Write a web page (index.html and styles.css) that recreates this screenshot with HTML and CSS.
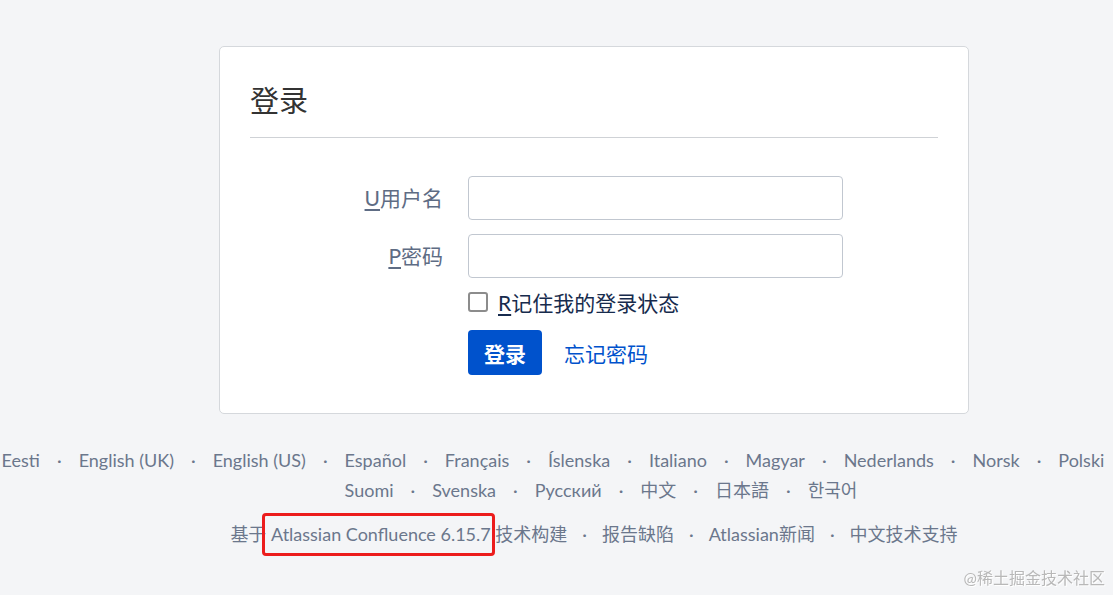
FILE: index.html
```html
<!DOCTYPE html>
<html lang="zh-CN">
<head>
    <meta charset="UTF-8">
    <title>登录 - Confluence</title>
    <link rel="stylesheet" href="styles.css">
</head>
<body>
    <div class="page">
        <div class="login-card">
            <div class="card-header">
                <h1>登录</h1>
            </div>
            <form class="login-form">
                <label class="field-label" for="os_username"><u>U</u>用户名</label>
                <input class="text-input" type="text" id="os_username">

                <label class="field-label" for="os_password"><u>P</u>密码</label>
                <input class="text-input" type="password" id="os_password">

                <div class="remember-row">
                    <span class="checkbox"></span>
                    <span class="remember-text"><u>R</u>记住我的登录状态</span>
                </div>

                <div class="button-row">
                    <button type="button" class="primary-button">登录</button>
                    <a href="#" class="forgot-link">忘记密码</a>
                </div>
            </form>
        </div>

        <div class="footer">
            <ul class="lang-row first">
                <li>Eesti</li>
                <li>English (UK)</li>
                <li>English (US)</li>
                <li>Español</li>
                <li>Français</li>
                <li>Íslenska</li>
                <li>Italiano</li>
                <li>Magyar</li>
                <li>Nederlands</li>
                <li>Norsk</li>
                <li>Polski</li>
            </ul>
            <ul class="lang-row second">
                <li>Suomi</li>
                <li>Svenska</li>
                <li>Русский</li>
                <li>中文</li>
                <li>日本語</li>
                <li>한국어</li>
            </ul>
            <ul class="poweredby">
                <li>基于 <span class="marked">Atlassian Confluence 6.15.7</span> 技术构建</li>
                <li>报告缺陷</li>
                <li>Atlassian新闻</li>
                <li>中文技术支持</li>
            </ul>
        </div>
    </div>
    <div class="watermark">@稀土掘金技术社区</div>
</body>
</html>
```

FILE: styles.css
```css
body {
    font-family: Lato, "Noto Sans CJK SC", sans-serif;
    margin: 0;
    padding: 0;
    background-color: #f4f5f7;
    overflow: hidden;
    height: 595px;
}
.page {
    padding-left: 75px;
    padding-top: 46px;
}
.login-card {
    width: 688px;
    margin: 0 auto;
    background-color: #ffffff;
    border: 1px solid #d5d8dc;
    border-radius: 5px;
    padding: 37px 30px 38px;
}
.card-header {
    border-bottom: 1px solid #cfd2d6;
    padding-bottom: 19px;
}
.card-header h1 {
    margin: 0;
    font-size: 29px;
    line-height: 34px;
    font-weight: 400;
    color: #333333;
}
.login-form {
    display: grid;
    grid-template-columns: 194px 375px;
    column-gap: 24px;
    row-gap: 14px;
    margin-top: 38px;
}
.field-label {
    font-size: 21px;
    color: #5e6c84;
    text-align: right;
    line-height: 44px;
    padding-right: 1px;
}
.field-label u {
    text-underline-offset: 3px;
}
.text-input {
    box-sizing: border-box;
    height: 44px;
    width: 375px;
    border: 1px solid #c1c7d0;
    border-radius: 4px;
    background: #ffffff;
    margin: 0;
}
.remember-row {
    grid-column: 2;
    display: flex;
    align-items: center;
    height: 20px;
}
.checkbox {
    box-sizing: border-box;
    width: 20px;
    height: 20px;
    border: 2px solid #8c8c8c;
    border-radius: 3px;
    margin-right: 10px;
}
.remember-text {
    font-size: 21px;
    color: #172b4d;
}
.remember-text u {
    text-underline-offset: 3px;
}
.button-row {
    grid-column: 2;
    display: flex;
    align-items: center;
    margin-top: 4px;
}
.primary-button {
    background-color: #0052cc;
    color: #ffffff;
    border: none;
    border-radius: 4px;
    width: 74px;
    height: 45px;
    font-family: inherit;
    font-size: 21px;
    font-weight: 700;
    cursor: pointer;
    padding: 0;
}
.forgot-link {
    color: #0052cc;
    text-decoration: none;
    font-size: 21px;
    margin-left: 22px;
}
.footer {
    margin-top: 31px;
    font-size: 18px;
    color: #6b778c;
}
.footer ul {
    list-style: none;
    margin: 0;
    padding: 0;
    display: flex;
    justify-content: center;
    white-space: nowrap;
    line-height: 30px;
}
.lang-row li + li::before {
    content: "·";
    margin: 0 17px;
}
.lang-row.first {
    margin-left: -82px;
}
.lang-row.second {
    padding-left: 14px;
}
.poweredby {
    margin-top: 14px !important;
}
.poweredby li + li::before {
    content: "·";
    margin: 0 15px;
}
.marked {
    position: relative;
}
.marked::after {
    content: "";
    position: absolute;
    left: -9px;
    right: -4px;
    top: -10px;
    bottom: -11px;
    border: 3px solid #ec1c1c;
    border-radius: 4px;
}
.watermark {
    position: fixed;
    right: 8px;
    bottom: 6px;
    font-size: 16px;
    color: #b8b8b8;
    text-shadow: 1px 1px 0 #ffffff;
}
```
